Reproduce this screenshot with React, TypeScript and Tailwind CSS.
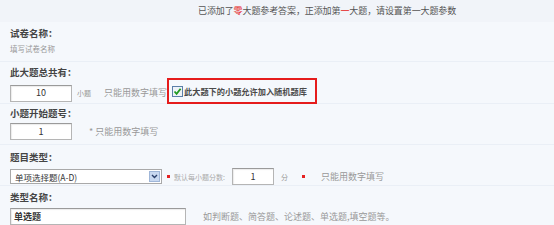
import React from "react";

const font = { fontFamily: '"Noto Sans CJK SC", "Noto Sans", sans-serif' };

function Input({ value, w, center = true, bold = false }: { value: string; w: string; center?: boolean; bold?: boolean }) {
  return (
    <div
      className={`${w} h-[17px] bg-white border border-[#b5b5b5] border-t-[#9a9a9a] shadow-[inset_1px_1px_1px_rgba(0,0,0,0.08)] flex items-center ${center ? "justify-center" : "pl-[3px]"} text-[9px] text-[#333] ${bold ? "font-semibold" : ""}`}
    >
      {value}
    </div>
  );
}

function Label({ children }: { children: React.ReactNode }) {
  return <div className="text-[9.5px] leading-[14px] font-semibold text-[#444]">{children}</div>;
}

export default function App() {
  return (
    <div style={font} className="w-[554px] h-[225px] overflow-hidden bg-[#f5f8fc] text-[#666] text-[9px] leading-[12px]">
      <div className="h-[22px] bg-[#f1f4f9] pl-[198px] flex items-center text-[9px] text-[#555] tracking-[-0.1px]">
        已添加了<span className="text-[#e52222]">零</span>大题参考答案，正添加第<span className="text-[#e52222]">一</span>大题，请设置第一大题参数
      </div>

      <div className="h-[40px] border-b border-[#eaeff6] pl-[10px] pt-[4px]">
        <Label>试卷名称：</Label>
        <div className="text-[7.5px] leading-[10px] mt-[4px] text-[#999]">填写试卷名称</div>
      </div>

      <div className="h-[42px] border-b border-[#eaeff6] pl-[10px] pt-[3px]">
        <Label>此大题总共有：</Label>
        <div className="flex items-center mt-[3px]">
          <Input value="10" w="w-[62px]" />
          <span className="ml-[5px] text-[7px] text-[#999]">小题</span>
          <span className="ml-[13px] text-[9px] text-[#999]">只能用数字填写</span>
          <div className="-mt-[4px] border-2 border-[#e51c1c] w-[150px] h-[26px] flex items-center pl-[3px]">
            <span className="w-[11px] h-[11px] border border-[#5b7fa8] bg-[#eef3f8] flex items-center justify-center">
              <svg width="9" height="9" viewBox="0 0 9 9">
                <path d="M1.5 4.5 L3.6 6.8 L7.6 1.8" fill="none" stroke="#1f9a1f" strokeWidth="1.8" />
              </svg>
            </span>
            <span className="ml-[1px] text-[8.2px] font-semibold text-[#4a4a4a]">此大题下的小题允许加入随机题库</span>
          </div>
        </div>
      </div>

      <div className="h-[41px] border-b border-[#eaeff6] pl-[10px] pt-[2px]">
        <Label>小题开始题号：</Label>
        <div className="flex items-center mt-[3px]">
          <Input value="1" w="w-[62px]" />
          <span className="ml-[17px] text-[9px] text-[#999]">* 只能用数字填写</span>
        </div>
      </div>

      <div className="h-[41px] border-b border-[#eaeff6] pl-[10px] pt-[5px]">
        <Label>题目类型：</Label>
        <div className="flex items-center mt-[4px]">
          <div className="w-[152px] h-[15px] bg-white border border-[#a9a9a9] flex items-center justify-between pl-[4px] pr-[1px] text-[8.5px] text-[#333]">
            <span>单项选择题(A-D)</span>
            <span className="w-[11px] h-[11px] bg-[#c9d9f1] border border-[#9fb6d8] flex items-center justify-center">
              <svg width="7" height="5" viewBox="0 0 7 5">
                <path d="M1 1 L3.5 3.5 L6 1" fill="none" stroke="#2a3f6a" strokeWidth="1.4" />
              </svg>
            </span>
          </div>
          <div className="ml-[5px] w-[3px] h-[3px] bg-[#e52222]" />
          <span className="ml-[4px] text-[7px] text-[#aaa]">默认每小题分数:</span>
          <div className="ml-[7px]"><Input value="1" w="w-[42px]" /></div>
          <span className="ml-[7px] text-[7px] text-[#999]">分</span>
          <div className="ml-[14px] w-[3px] h-[3px] bg-[#e52222]" />
          <span className="ml-[16px] text-[9px] text-[#999]">只能用数字填写</span>
        </div>
      </div>

      <div className="pl-[10px] pt-[4px]">
        <Label>类型名称：</Label>
        <div className="flex items-center mt-[4px]">
          <Input value="单选题" w="w-[176px]" center={false} bold />
          <span className="ml-[17px] text-[9px] text-[#999]">如判断题、简答题、论述题、单选题,填空题等。</span>
        </div>
      </div>
    </div>
  );
}
